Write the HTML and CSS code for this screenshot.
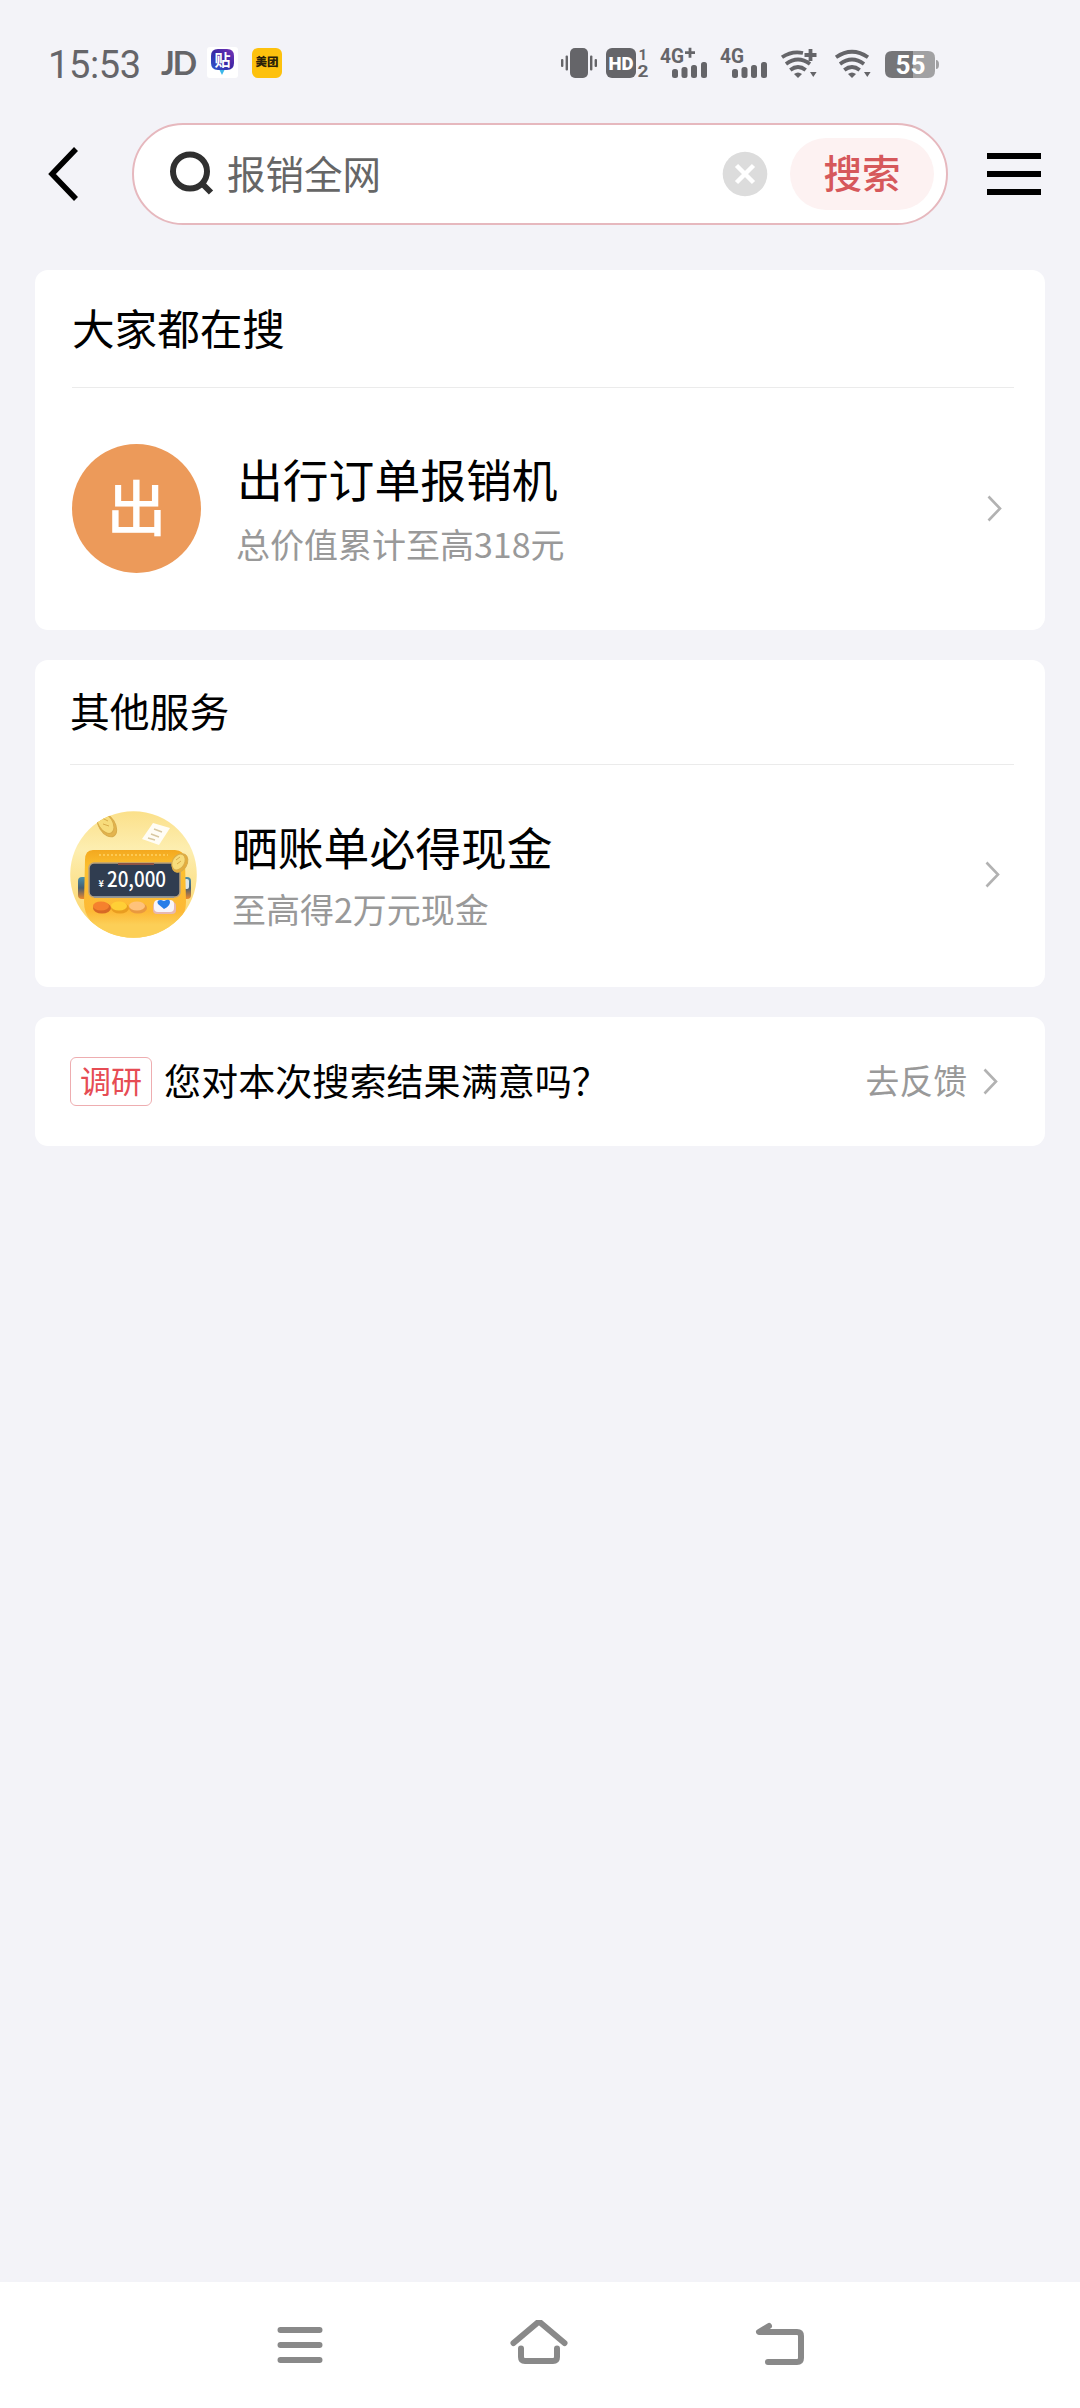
FILE: index.html
```html
<!DOCTYPE html>
<html lang="zh-CN">
<head>
<meta charset="utf-8">
<meta name="viewport" content="width=device-width">
<title>搜索</title>
<link rel="stylesheet" href="styles.css">
</head>
<body>
<div class="screen">
  <header class="status">
    <span class="time">15:53</span>
    <span class="jd">JD</span>
    <svg class="app-tie" width="31" height="31" viewBox="0 0 31 31">
      <defs><linearGradient id="tie" x1="0" y1="1" x2="1" y2="0"><stop offset="0" stop-color="#2c5bd0"/><stop offset=".5" stop-color="#3a27a4"/><stop offset="1" stop-color="#7a35b8"/></linearGradient></defs>
      <rect width="31" height="31" rx="3" fill="#fff"/>
      <path d="M11 2h9q7 0 7 7v7q0 7-7 7h-9q-7 0-7-7V9q0-7 7-7z" fill="url(#tie)"/>
      <path d="M12.500 23h5L15 28z" fill="#3cb7ea"/>
      <text x="15.500" y="18.500" font-size="16" font-weight="700" text-anchor="middle" fill="#fff">贴</text>
    </svg>
    <span class="app-mt">美团</span>
    <svg class="indicators" width="380" height="50" viewBox="560 36 380 50">
      <g fill="#656569">
        <rect x="570" y="48" width="18" height="30" rx="5"/>
        <rect x="561" y="59" width="2.400" height="8" rx="1"/><rect x="565.600" y="55.500" width="2.400" height="15" rx="1"/>
        <rect x="590" y="55.500" width="2.400" height="15" rx="1"/><rect x="594.600" y="59" width="2.400" height="8" rx="1"/>
        <rect x="606" y="48" width="30" height="30" rx="6"/>
        <text x="638.500" y="59.500" font-size="15" font-weight="700">1</text>
        <text x="637.500" y="76.800" font-size="16" font-weight="700" textLength="11" lengthAdjust="spacingAndGlyphs">2</text>
        <text x="660" y="62.500" font-size="20" font-weight="700" textLength="24" lengthAdjust="spacingAndGlyphs">4G</text>
        <path d="M685 51.300h10v2.800h-10zM688.600 47.800h2.800v10h-2.800z"/>
        <rect x="672" y="69" width="6" height="9" rx="2.500"/><rect x="681.500" y="67" width="6" height="11" rx="2.500"/><rect x="691" y="65" width="6" height="13" rx="2.500"/><rect x="701" y="62" width="6" height="16" rx="2.500"/>
        <text x="720" y="62.500" font-size="20" font-weight="700" textLength="24" lengthAdjust="spacingAndGlyphs">4G</text>
        <rect x="732" y="69" width="6" height="9" rx="2.500"/><rect x="741.500" y="67" width="6" height="11" rx="2.500"/><rect x="751" y="65" width="6" height="13" rx="2.500"/><rect x="761" y="62" width="6" height="16" rx="2.500"/>
        <path d="M794 74q4-3 8 0l-4 4zM810 72h6.600l-3.300 5zM848 74q4-3 8 0l-4 4zM864 72h6.600l-3.300 5z"/>
      </g>
      <g fill="none" stroke="#656569" stroke-width="3.800">
        <path d="M782 57.300Q792 50.500 803 53M786 64q12-9 24 0M790.300 70q7.700-6 15.400 0M810.500 49v12M804.500 55h12"/>
        <path d="M836 57.300q16-11 32 0M840 64q12-9 24 0M844.300 70q7.700-6 15.400 0"/>
      </g>
      <text x="621" y="69.500" font-size="18" font-weight="900" text-anchor="middle" fill="#fff" textLength="25" lengthAdjust="spacingAndGlyphs">HD</text>
      <path d="M892 51h21v27h-21q-7 0-7-7V58q0-7 7-7z" fill="#757578"/>
      <path d="M913 51h15q7 0 7 7v13q0 7-7 7h-15zM936 60q3 0 3 4.500t-3 4.500z" fill="#a1a1a3"/>
      <text x="910.500" y="74" font-size="26" font-weight="700" text-anchor="middle" fill="#fff" textLength="30" lengthAdjust="spacingAndGlyphs">55</text>
    </svg>
  </header>

  <div class="searchbar">
    <svg class="back" width="32" height="56" viewBox="0 0 32 56"><path d="M28 3 4 28l24 25" fill="none" stroke="#000" stroke-width="5.500"/></svg>
    <div class="field">
      <svg class="lens" width="46" height="46" viewBox="0 0 46 46" fill="none" stroke="#303030" stroke-width="6"><circle cx="21" cy="20.500" r="17"/><path d="m33 32.500 9 9"/></svg>
      <span class="query">报销全网</span>
      <svg class="clear" width="46" height="46" viewBox="0 0 46 46"><circle cx="23" cy="23" r="22.300" fill="#dcdcdc"/><path d="m14.500 14.500 17 17m0-17-17 17" stroke="#fff" stroke-width="4.500"/></svg>
      <span class="go">搜索</span>
    </div>
    <svg class="menu" width="54" height="42" viewBox="0 0 54 42"><path d="M0 0h54v6H0zM0 18h54v6H0zM0 36h54v6H0z"/></svg>
  </div>

  <main class="results">
    <section class="card popular">
      <h2 class="head">大家都在搜</h2>
      <div class="item">
        <span class="avatar">出</span>
        <div class="info"><div class="title">出行订单报销机</div><div class="desc">总价值累计至高318元</div></div>
        <svg class="chev" width="15" height="27" viewBox="0 0 15 27"><path d="m1.500 1.500 11.500 12-11.500 12"/></svg>
      </div>
    </section>

    <section class="card services">
      <h2 class="head">其他服务</h2>
      <div class="item">
        <svg class="photo" width="127" height="127" viewBox="0 0 127 127">
          <defs>
            <clipPath id="disc"><circle cx="63.500" cy="63.500" r="63.300"/></clipPath>
            <linearGradient id="sky" x1="0" y1="0" x2="0" y2="1"><stop offset="0" stop-color="#fbe08a"/><stop offset=".3" stop-color="#fdeeb0"/><stop offset="1" stop-color="#fbd05c"/></linearGradient>
            <linearGradient id="shell" x1="0" y1="0" x2="0" y2="1"><stop offset="0" stop-color="#f3a81f"/><stop offset=".2" stop-color="#fcc02f"/><stop offset=".7" stop-color="#fdb936"/><stop offset=".85" stop-color="#fccf57"/></linearGradient>
            <linearGradient id="knob" x1="0" y1="0" x2="0" y2="1"><stop offset="0" stop-color="#4c91aa"/><stop offset=".5" stop-color="#465e72"/><stop offset="1" stop-color="#f08a2a"/></linearGradient>
          </defs>
          <g clip-path="url(#disc)">
            <rect width="127" height="127" fill="url(#sky)"/>
            <rect x="8" y="66" width="10" height="22" rx="4" fill="url(#knob)"/>
            <rect x="112" y="66" width="9" height="22" rx="4" fill="url(#knob)"/>
            <rect x="114" y="68" width="5" height="10" rx="2" fill="#dce6e7"/>
            <path d="M23 39h82q9 0 10 10l1 42q0 10-6 18v18H20v-18q-6-8-6-18l1-42q0-10 8-10z" fill="url(#shell)"/>
            <path d="M29 44h69" stroke="#ffd263" stroke-width="1.500" stroke-dasharray="2 2"/>
            <rect x="19" y="52" width="91" height="34" rx="5" fill="#303d50" stroke="#b8a17c" stroke-width="1.500"/>
            <path d="M48 53h36" stroke="#8e5344" stroke-width="2"/>
            <path d="M24 86h80" stroke="#8693a2" stroke-width="1.500"/>
            <ellipse cx="32" cy="97" rx="9" ry="5.500" fill="#d76925"/><ellipse cx="31" cy="95" rx="8" ry="4.500" fill="#f5812e"/>
            <ellipse cx="50" cy="97" rx="9" ry="5.500" fill="#e99d20"/><ellipse cx="49" cy="95" rx="8" ry="4.500" fill="#ffcf36"/>
            <ellipse cx="68" cy="97" rx="9" ry="5.500" fill="#e9993f"/><ellipse cx="67" cy="95" rx="8" ry="4.500" fill="#ffc27b"/>
            <rect x="83" y="91" width="23" height="12" rx="4" fill="#e7b8b1"/><rect x="84" y="89" width="20" height="12" rx="4" fill="#f8f5fa"/>
            <path d="m94 98-6-5q-2-4 3-4l3 1q6-3 6 1 0 4-6 7z" fill="#277de8"/>
            <g fill="#f7dc7b" stroke="#d8ac4a" stroke-width="1"><ellipse cx="37" cy="14" rx="8" ry="13" transform="rotate(-32 37 14)" fill="#e3b44e"/><ellipse cx="35.500" cy="12" rx="7" ry="11.500" transform="rotate(-32 35.500 12)"/><path d="m32 7 6 3m-5 3 6 2" fill="none"/>
            <ellipse cx="110" cy="52" rx="7" ry="10" transform="rotate(30 110 52)" fill="#e4ad3d"/><ellipse cx="108.500" cy="51" rx="6" ry="8.500" transform="rotate(30 108.500 51)"/><path d="m106 49 4-3m-3 7 4-3" fill="none"/></g>
            <path d="m83 12 17 5-11 17-17-6z" fill="#fffdf5"/><path d="m84 18 8 3m-11 2 8 3m-11 1 7 2" stroke="#d8c8a2" stroke-width="1.500"/>
            <text x="28.500" y="76" font-size="9" font-weight="700" fill="#fff">¥</text>
            <text x="37" y="76" font-size="21" font-weight="500" fill="#fff" textLength="59" lengthAdjust="spacingAndGlyphs">20,000</text>
          </g>
        </svg>
        <div class="info"><div class="title">晒账单必得现金</div><div class="desc">至高得2万元现金</div></div>
        <svg class="chev" width="15" height="27" viewBox="0 0 15 27"><path d="m1.500 1.500 11.500 12-11.500 12"/></svg>
      </div>
    </section>

    <section class="card survey">
      <span class="tag">调研</span>
      <span class="question">您对本次搜索结果满意吗？</span>
      <span class="feedback">去反馈</span>
      <svg class="chev" width="15" height="27" viewBox="0 0 15 27"><path d="m1.500 1.500 11.500 12-11.500 12"/></svg>
    </section>
  </main>

  <nav class="sysnav">
    <svg width="50" height="44" viewBox="275 2323 50 44"><path d="M280.500 2330h39m-39 15h39m-39 15h39"/></svg>
    <svg width="60" height="50" viewBox="510 2319 60 50"><path d="m514.500 2342 25.500-21.500 25.500 21.500M522 2347.500v8.500q0 4 4 4h28q4 0 4-4v-8.500"/></svg>
    <svg width="54" height="46" viewBox="753 2320 54 46"><path d="m769 2324-10 6h38q4 0 4 4v22q0 4-4 4h-29"/></svg>
  </nav>
</div>
</body>
</html>
```
FILE: styles.css
```css
* { box-sizing: border-box; }
body { margin: 0; background: #f3f3f8; color: #000; font-family: "Noto Sans CJK SC", sans-serif; }
svg { display: block; flex: none; }
.screen { width: 1080px; height: 2408px; display: flex; flex-direction: column; overflow: hidden; white-space: nowrap; }

/* status bar */
.status { height: 123px; padding-left: 48px; display: flex; align-items: flex-start; color: #656569; font-family: Roboto, "Noto Sans CJK SC", sans-serif; }
.time { width: 113px; margin-top: 43px; font-size: 38px; line-height: 44px; letter-spacing: -.4px; }
.jd { width: 46px; margin-top: 43px; font: 700 32px/40px Lato, sans-serif; letter-spacing: -2px; }
.app-tie { margin-top: 47px; }
.app-mt { width: 30px; height: 30px; margin: 48px 0 0 14px; border-radius: 6px; background: #fdc10d; color: #2a2008; font-size: 11.5px; line-height: 29px; font-weight: 900; text-align: center; }
.indicators { margin: 36px 0 0 278px; }

/* search */
.searchbar { height: 102px; display: flex; align-items: center; padding-left: 48px; }
.back { margin-right: 52px; }
.field { width: 816px; height: 102px; display: flex; align-items: center; padding: 0 12px 0 35px; border: 2px solid #e6b8be; border-radius: 51px; background: #fff; }
.query { flex: 1; margin-left: 12px; font-size: 38.5px; line-height: 56px; color: #666; padding-bottom: 5px; }
.clear { margin-right: 22px; }
.go { width: 144px; height: 72px; border-radius: 36px; background: #fdf2f2; color: #d6585b; font-size: 38.5px; font-weight: 500; line-height: 67px; text-align: center; }
.menu { margin-left: 39px; }

/* result cards */
.results { flex: 1; padding: 45px 35px 0; display: flex; flex-direction: column; gap: 30px; }
.card { border-radius: 13px; background: #fff; }
.head { margin: 0; border-bottom: 1.5px solid #ebebeb; font-weight: 400; }
.item { display: flex; align-items: center; }
.info { flex: 1; }
.title { font-size: 45.8px; line-height: 62px; }
.desc { font-size: 34px; line-height: 50px; color: #999; }
.chev { fill: none; stroke: #b2b2b2; stroke-width: 2.6; }

.popular { height: 360px; padding: 0 31px 0 37px; }
.popular .head { height: 118px; font-size: 42.6px; line-height: 113px; }
.popular .item { height: 242px; padding: 0 12px 2px 0; }
.avatar { width: 129px; height: 129px; margin-right: 36px; border-radius: 50%; background: #ec9a5a; color: #fff; font-size: 60px; font-weight: 500; line-height: 122px; text-align: center; }
.popular .title { margin-bottom: 10px; }
.popular .desc { margin-left: -1px; }

.services { height: 327px; padding: 0 31px 0 35px; }
.services .head { height: 105px; font-size: 39.8px; line-height: 100px; }
.services .item { height: 222px; padding: 0 14px 4px 0; }
.services .photo { margin-right: 35px; }
.services .title { margin-bottom: 7px; }

.survey { height: 129px; display: flex; align-items: center; padding: 0 47px 0 35px; }
.tag { width: 82px; height: 49px; border: 1.5px solid #eeadb0; border-radius: 6px; color: #e64c54; font-size: 31px; line-height: 43px; text-align: center; }
.question { flex: 1; margin-left: 12px; font-size: 37.1px; line-height: 54px; padding-bottom: 4px; }
.feedback { margin-right: 16px; font-size: 33.8px; line-height: 50px; color: #999; padding-bottom: 3px; }

/* system navigation */
.sysnav { height: 126px; padding: 0 273px 0 275px; display: flex; align-items: center; justify-content: space-between; background: #fff; }
.sysnav path { fill: none; stroke: #898989; stroke-width: 6; stroke-linecap: round; stroke-linejoin: round; }
```
